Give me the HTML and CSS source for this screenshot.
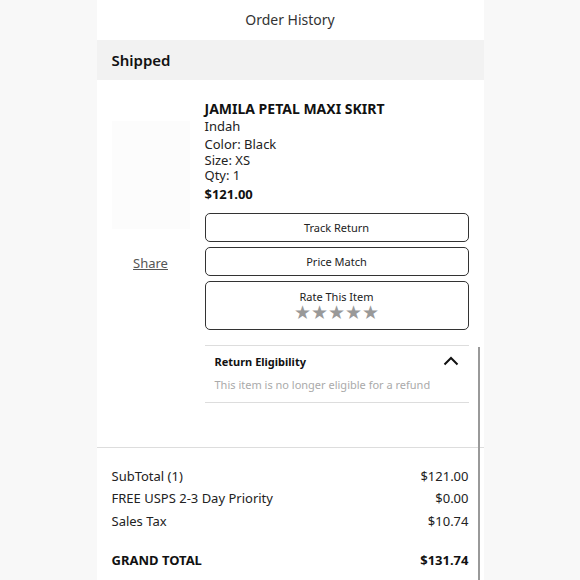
FILE: index.html
```html
<!DOCTYPE html>
<html lang="en">
<head>
  <meta charset="UTF-8">
  <meta name="viewport" content="width=device-width, initial-scale=1.0">
  <title>Order History</title>
  <link rel="stylesheet" href="styles.css">
</head>
<body>
  <div class="screen">
    <div class="page-title">Order History</div>
    <div class="status-bar">Shipped</div>

    <!-- item -->
    <div class="item">
      <div class="item-side">
        <div class="item-image"></div>
        <a class="share" href="#">Share</a>
      </div>
      <div class="item-info">
        <div class="item-name">JAMILA PETAL MAXI SKIRT</div>
        <div class="item-brand">Indah</div>
        <div class="item-attrs">
          <div>Color: Black</div>
          <div>Size: XS</div>
          <div>Qty: 1</div>
        </div>
        <div class="item-price">$121.00</div>
        <button class="action">Track Return</button>
        <button class="action">Price Match</button>
        <button class="action rate">
          <span class="rate-label">Rate This Item</span>
          <span class="stars">★★★★★</span>
        </button>
        <div class="eligibility">
          <div class="elig-head">
            <span>Return Eligibility</span>
            <svg width="16" height="10" viewBox="0 0 16 10"><path d="M1.5 8.5 L8 2 L14.5 8.5" fill="none" stroke="#111" stroke-width="2"/></svg>
          </div>
          <div class="elig-text">This item is no longer eligible for a refund</div>
        </div>
      </div>
    </div>

    <!-- totals -->
    <div class="summary">
      <div class="row"><span>SubTotal (1)</span><span>$121.00</span></div>
      <div class="row"><span>FREE USPS 2-3 Day Priority</span><span>$0.00</span></div>
      <div class="row"><span>Sales Tax</span><span>$10.74</span></div>
      <div class="row grand"><span>GRAND TOTAL</span><span>$131.74</span></div>
    </div>

    <div class="scrollbar"></div>
  </div>
</body>
</html>
```

FILE: styles.css
```css
body {
  margin: 0;
  background: #f8f8f8;
  font-family: "Noto Sans", Arial, sans-serif;
  color: #222;
}
.screen {
  position: relative;
  width: 387px;
  height: 580px;
  margin: 0 auto;
  background: #fff;
  overflow: hidden;
}
.page-title {
  height: 38px;
  display: flex;
  align-items: center;
  justify-content: center;
  font-size: 14px;
  color: #333;
}
.status-bar {
  margin-top: 2px;
  height: 40px;
  display: flex;
  align-items: center;
  padding-left: 15px;
  background: #f2f2f2;
  font-size: 15px;
  font-weight: 600;
  color: #111;
}
/* item block */
.item {
  display: flex;
  padding: 20px 15px 0 0;
}
.item-side {
  width: 108px;
  display: flex;
  flex-direction: column;
  align-items: center;
  padding-top: 21px;
}
.item-image {
  width: 78px;
  height: 108px;
  background: #fcfcfc;
}
.share {
  margin-top: 25px;
  font-size: 13px;
  color: #555;
  text-decoration: underline;
}
.item-info {
  flex: 1;
}
.item-name {
  font-size: 14px;
  font-weight: 700;
  color: #111;
  line-height: 18px;
}
.item-brand {
  font-size: 13px;
  line-height: 16px;
}
.item-attrs {
  margin-top: 3px;
  font-size: 13px;
  line-height: 15.5px;
}
.item-price {
  margin-top: 1px;
  font-size: 13px;
  font-weight: 700;
  color: #111;
  line-height: 18px;
}
.action {
  display: flex;
  flex-direction: column;
  align-items: center;
  justify-content: center;
  width: 100%;
  height: 29px;
  margin-top: 5px;
  padding: 0;
  background: #fff;
  border: 1px solid #333;
  border-radius: 5px;
  font-family: inherit;
  font-size: 11px;
  color: #222;
}
.action:first-of-type {
  margin-top: 10px;
}
.action.rate {
  height: 49px;
}
.rate-label {
  line-height: 14px;
}
.stars {
  font-size: 19px;
  line-height: 17px;
  color: #999;
}
.eligibility {
  margin-top: 15px;
  border-top: 1px solid #ddd;
  border-bottom: 1px solid #ddd;
  padding: 8px 10px 10px 10px;
}
.elig-head {
  display: flex;
  justify-content: space-between;
  align-items: center;
  font-size: 11px;
  font-weight: 700;
  color: #111;
}
.elig-text {
  margin-top: 8px;
  font-size: 11px;
  color: #aaa;
}
/* totals */
.summary {
  margin-top: 44px;
  border-top: 1px solid #ddd;
  padding: 17px 15px 0 15px;
}
.row {
  display: flex;
  justify-content: space-between;
  font-size: 13px;
  line-height: 22.5px;
}
.row.grand {
  margin-top: 17px;
  font-weight: 700;
  color: #111;
}
.scrollbar {
  position: absolute;
  left: 381px;
  top: 347px;
  width: 2px;
  height: 240px;
  background: #999;
}
```
